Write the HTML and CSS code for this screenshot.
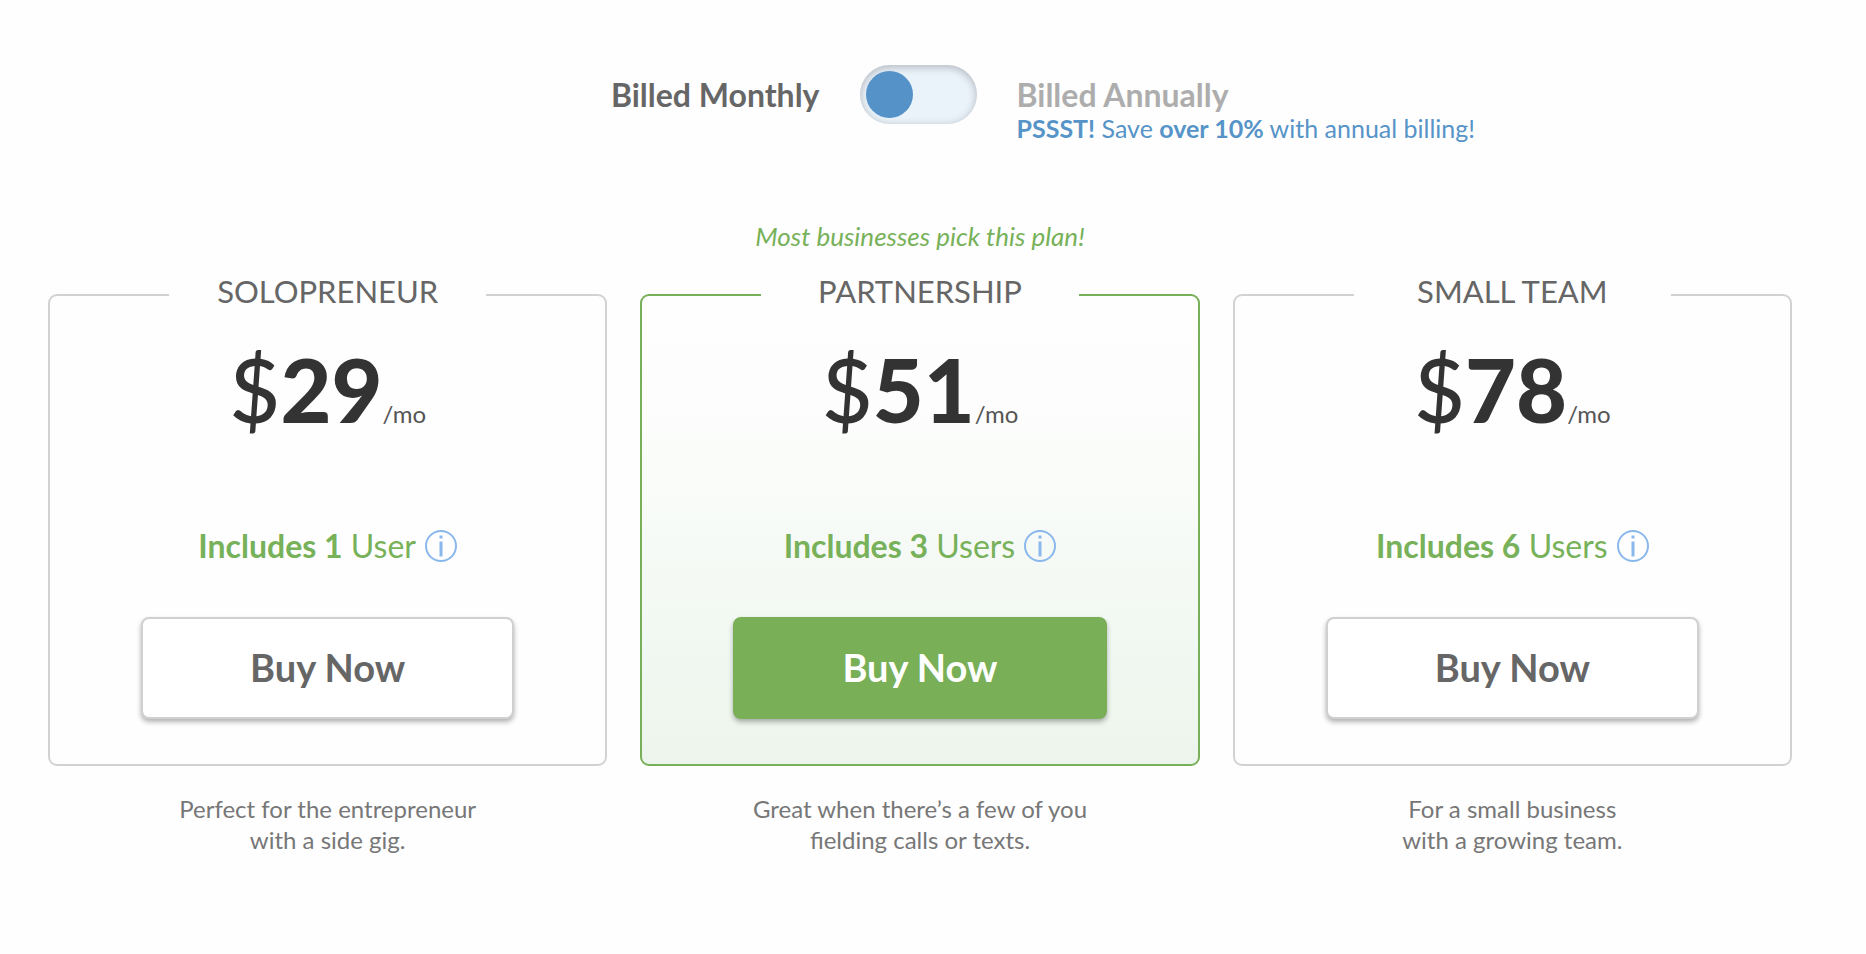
FILE: index.html
```html
<!DOCTYPE html>
<html lang="en">
<head>
  <meta charset="UTF-8" />
  <meta name="viewport" content="width=device-width, initial-scale=1" />
  <title>Pricing</title>
  <link rel="stylesheet" href="styles.css">
</head>
<body>

  <div class="billing">
    <label class="billing-label monthly" for="billingToggle">Billed Monthly</label>
    <input id="billingToggle" class="toggle" type="checkbox" role="switch" />
    <div class="annual">
      <label class="billing-label" for="billingToggle">Billed Annually</label>
      <p class="savings"><b>PSSST!</b> Save <b>over 10%</b> with annual billing!</p>
    </div>
  </div>

  <main class="plans">
    <section class="plan">
      <div class="card">
        <h2 class="plan-name">SOLOPRENEUR</h2>
        <p class="price"><span class="currency">$</span>29<span class="period">/mo</span></p>
        <p class="users">
          <span><b>Includes 1</b> User</span>
          <button class="info" type="button" aria-label="About users">
            <svg viewBox="0 0 32 32" width="32" height="32"><circle cx="16" cy="16" r="15" /><path d="M16 11.500V26.500" /><path d="M16 5.500V8.500" /></svg>
          </button>
        </p>
        <button class="buy" type="button">Buy Now</button>
      </div>
      <p class="description">Perfect for the entrepreneur<br>with a side gig.</p>
    </section>

    <section class="plan featured">
      <p class="note">Most businesses pick this plan!</p>
      <div class="card">
        <h2 class="plan-name">PARTNERSHIP</h2>
        <p class="price"><span class="currency">$</span>51<span class="period">/mo</span></p>
        <p class="users">
          <span><b>Includes 3</b> Users</span>
          <button class="info" type="button" aria-label="About users">
            <svg viewBox="0 0 32 32" width="32" height="32"><circle cx="16" cy="16" r="15" /><path d="M16 11.500V26.500" /><path d="M16 5.500V8.500" /></svg>
          </button>
        </p>
        <button class="buy" type="button">Buy Now</button>
      </div>
      <p class="description">Great when there’s a few of you<br>fielding calls or texts.</p>
    </section>

    <section class="plan">
      <div class="card">
        <h2 class="plan-name">SMALL TEAM</h2>
        <p class="price"><span class="currency">$</span>78<span class="period">/mo</span></p>
        <p class="users">
          <span><b>Includes 6</b> Users</span>
          <button class="info" type="button" aria-label="About users">
            <svg viewBox="0 0 32 32" width="32" height="32"><circle cx="16" cy="16" r="15" /><path d="M16 11.500V26.500" /><path d="M16 5.500V8.500" /></svg>
          </button>
        </p>
        <button class="buy" type="button">Buy Now</button>
      </div>
      <p class="description">For a small business<br>with a growing team.</p>
    </section>
  </main>

</body>
</html>
```
FILE: styles.css
```css
* {
  box-sizing: border-box;
}
body {
  margin: 0;
  padding: 65px 74px 40px 48px;
  font-family: Lato, "Open Sans", sans-serif;
  font-size: 24px;
  color: #666;
  background: #fefefe;
}
h2, p {
  margin: 0;
}
button {
  font-family: inherit;
  cursor: pointer;
}

/* Monthly / annual switch */
.billing {
  display: grid;
  grid-template-columns: 1fr auto 1fr;
  column-gap: 40px;
  align-items: start;
  margin-bottom: 76px;
  padding-right: 4px;
}
.billing-label {
  display: block;
  font-size: 32px;
  font-weight: bold;
  line-height: 36px;
}
.monthly {
  margin-top: 12px;
  text-align: right;
}
.annual {
  margin-top: 12px;
}
.annual .billing-label {
  color: #adadad;
}
.savings {
  font-size: 25px;
  line-height: 31px;
  color: #5694c8;
}
.toggle {
  appearance: none;
  display: flex;
  width: 117px;
  height: 59px;
  margin: 0;
  padding: 6px;
  border-radius: 30px;
  background: #eaf2fa;
  box-shadow: inset 0 2px 8px rgba(0, 0, 0, 0.25);
  cursor: pointer;
}
.toggle::before {
  content: "";
  width: 47px;
  height: 47px;
  border-radius: 50%;
  background: #5592c8;
}
.toggle:checked {
  justify-content: flex-end;
}

/* Plans */
.plans {
  display: grid;
  grid-template-columns: repeat(3, 1fr);
  gap: 33px;
  align-items: end;
  text-align: center;
}
.note {
  margin-bottom: 42px;
  font-size: 26px;
  font-style: italic;
  line-height: 32px;
  color: #77b159;
}
.card {
  padding: 0 91px 45px;
  border: 2px solid #d2d2d2;
  border-radius: 9px;
}
.featured .card {
  border-color: #78b05a;
  background: linear-gradient(#fefefe, #fcfdfc 25%, #ecf5ec);
}
.plan-name {
  width: 85%;
  margin: -23px auto 30px;
  font-size: 31px;
  font-weight: normal;
  line-height: 36px;
  background: #fefefe;
}
.price {
  font-size: 88px;
  font-weight: 900;
  line-height: 100px;
  color: #333;
}
.currency {
  font-weight: 500;
}
.period {
  font-size: 24px;
  font-weight: normal;
  line-height: 24px;
  color: #555;
}
.users {
  display: flex;
  justify-content: center;
  align-items: center;
  gap: 9px;
  margin: 89px 0 53px;
  font-size: 32px;
  line-height: 36px;
  color: #77b159;
}
.info {
  display: flex;
  padding: 0;
  border: 0;
  background: none;
}
.info svg {
  fill: none;
  stroke: #8ab8ec;
  stroke-width: 2;
}
.info path {
  stroke-width: 3;
}
.buy {
  display: block;
  width: 100%;
  height: 102px;
  padding: 0 0 2px;
  border: 2px solid #d0d0d0;
  border-radius: 8px;
  font-size: 38px;
  font-weight: bold;
  color: #666;
  background: #fff;
  box-shadow: 0 3px 5px rgba(0, 0, 0, 0.3);
}
.featured .buy {
  border-color: #78af57;
  color: #fff;
  background: #78af57;
}
.description {
  margin-top: 27px;
  line-height: 31px;
  color: #777;
}
```
